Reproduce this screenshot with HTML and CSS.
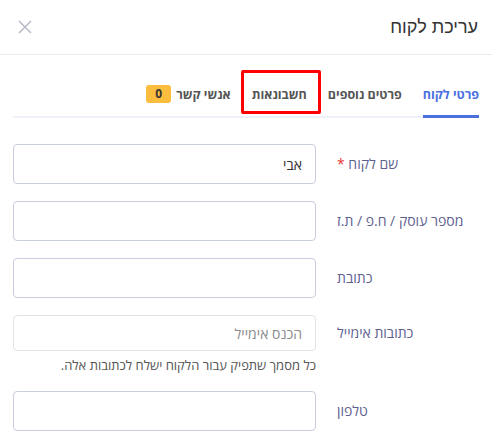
FILE: index.html
```html
<!DOCTYPE html>
<html lang="he" dir="rtl">
<head>
    <meta charset="UTF-8">
    <meta name="viewport" content="width=device-width, initial-scale=1.0">
    <title>עריכת לקוח</title>
    <link rel="stylesheet" href="styles.css">
</head>
<body>

<div class="modal-header">
    <h2>עריכת לקוח</h2>
    <button class="close-btn" aria-label="סגור">
        <svg width="14" height="14" viewBox="0 0 14 14"><path d="M1 1L13 13M13 1L1 13" stroke="#b9bbc9" stroke-width="1.6" fill="none"/></svg>
    </button>
</div>

<div class="tabs">
    <div class="tab active">פרטי לקוח</div>
    <div class="tab">פרטים נוספים</div>
    <div class="tab marked">חשבונאות</div>
    <div class="tab">אנשי קשר <span class="badge">0</span></div>
</div>

<div class="form">
    <div class="row">
        <label>שם לקוח <span class="req">*</span></label>
        <input type="text" value="אבי">
    </div>
    <div class="row">
        <label>מספר עוסק / ח.פ / ת.ז</label>
        <input type="text">
    </div>
    <div class="row">
        <label>כתובת</label>
        <input type="text">
    </div>
    <div class="row short">
        <label>כתובות אימייל</label>
        <input type="text" class="email" placeholder="הכנס אימייל">
    </div>
    <div class="hint">כל מסמך שתפיק עבור הלקוח ישלח לכתובות אלה.</div>
    <div class="row">
        <label>טלפון</label>
        <input type="text">
    </div>
</div>

</body>
</html>
```

FILE: styles.css
```css
body {
    margin: 0;
    padding: 0;
    background: #ffffff;
    font-family: "Open Sans", "Liberation Sans", sans-serif;
    color: #333;
    direction: rtl;
}
.modal-header {
    height: 54px;
    border-bottom: 1px solid #e9e9ee;
    display: flex;
    align-items: center;
    justify-content: space-between;
    padding: 0 14px 0 18px;
}
.modal-header h2 {
    margin: 0;
    font-family: "Liberation Sans", sans-serif;
    font-size: 18px;
    font-weight: normal;
    color: #333;
}
.close-btn {
    background: none;
    border: none;
    padding: 0;
    width: 14px;
    height: 14px;
    cursor: pointer;
}
.tabs {
    margin: 15px 13px 0;
    display: flex;
    gap: 21px;
    border-bottom: 2px solid #eef0fa;
    height: 46px;
}
.tab {
    position: relative;
    display: flex;
    align-items: center;
    gap: 5px;
    font-size: 12.5px;
    font-weight: bold;
    color: #555;
    margin-bottom: -2px;
    border-bottom: 3px solid transparent;
    padding-top: 3px;
}
.tab.active {
    color: #4a6fe0;
    border-bottom-color: #4a6fe0;
}
.tab.marked::after {
    content: "";
    position: absolute;
    top: 0;
    bottom: 1px;
    left: -11px;
    right: -14px;
    border: 3px solid #f00;
    border-radius: 2px;
}
.badge {
    display: inline-block;
    background: #fbbd3d;
    color: #333;
    border-radius: 3px;
    width: 25px;
    height: 18px;
    line-height: 18px;
    text-align: center;
    font-size: 12px;
}
.form {
    padding: 26px 13px 0;
}
.row {
    display: grid;
    grid-template-columns: 142px 1fr;
    column-gap: 21px;
    align-items: center;
    height: 40px;
    margin-bottom: 17px;
}
.row.short {
    height: 36px;
}
.row label {
    font-size: 14px;
    line-height: 18px;
    color: #5e6190;
    text-align: left;
}
.req {
    color: #e53935;
}
.row input {
    box-sizing: border-box;
    height: 40px;
    border: 1px solid #c9cde0;
    border-radius: 4px;
    padding: 0 13px;
    font-family: inherit;
    font-size: 14px;
    color: #333;
    direction: rtl;
    outline: none;
}
.row input.email {
    height: 36px;
    border-color: #e1e3ea;
}
.row input::placeholder {
    color: #8a8a8a;
}
.hint {
    width: 303px;
    margin: -11px auto 0 0;
    font-size: 13px;
    line-height: 16px;
    color: #555;
    padding-bottom: 18px;
}
```
